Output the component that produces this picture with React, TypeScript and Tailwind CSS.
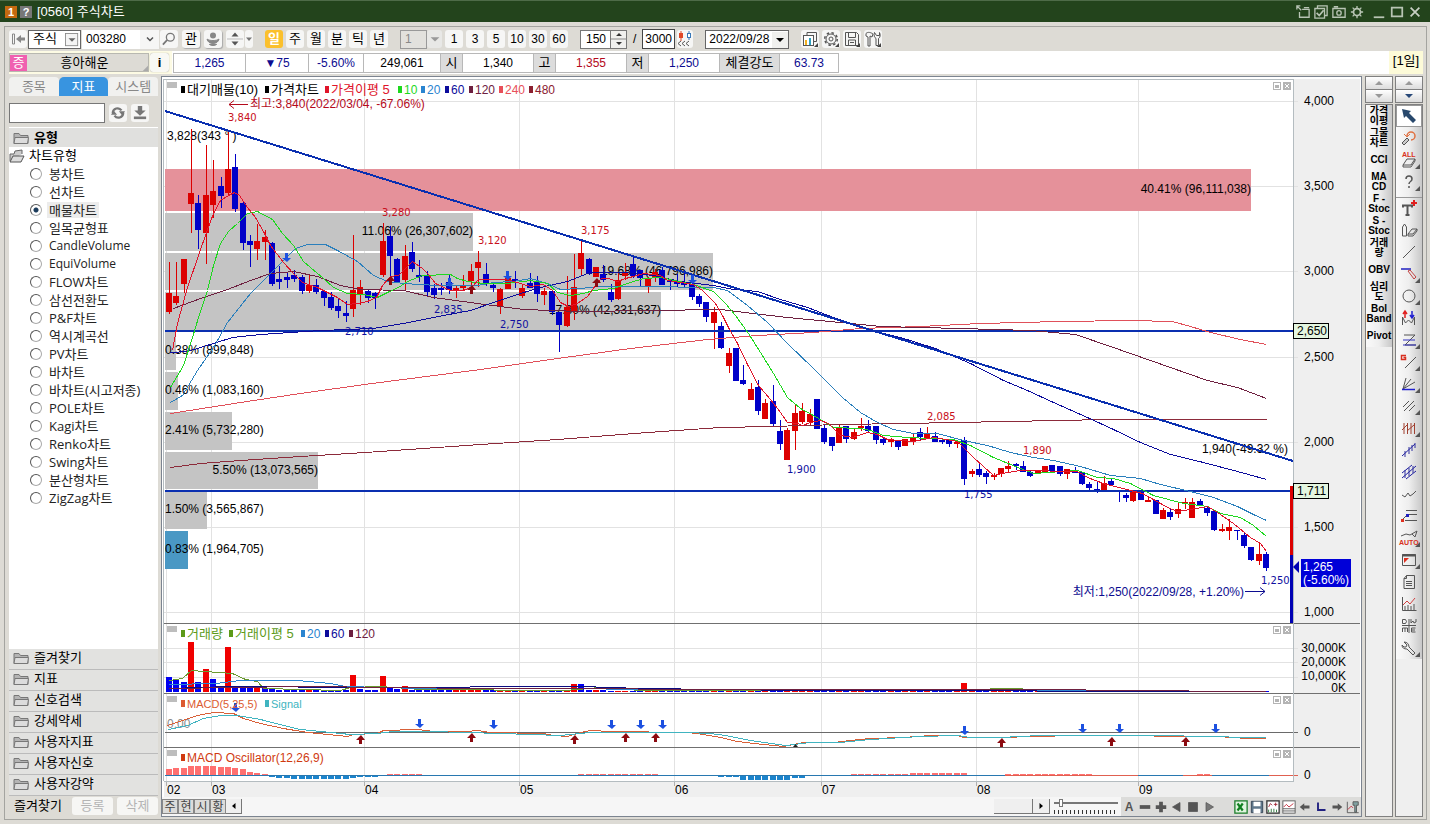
import { useState } from 'react';
import type { ReactNode } from 'react';

// [high, top, bottom, low, rising]
type Candle = [number, number, number, number, 0 | 1];

const candles: Candle[] = [
  [262, 293, 312, 314, 1], [262, 296, 303, 305, 1], [259, 259, 284, 293, 1], [129, 193, 204, 233, 1],
  [195, 203, 230, 249, 0], [145, 195, 233, 264, 1], [160, 191, 205, 218, 1], [177, 186, 196, 208, 0],
  [130, 169, 193, 195, 1], [154, 167, 209, 212, 0], [201, 203, 243, 250, 0], [235, 241, 245, 267, 0],
  [224, 241, 249, 260, 1], [230, 237, 242, 260, 1], [242, 243, 284, 286, 0], [266, 279, 282, 289, 0],
  [272, 277, 280, 288, 0], [270, 275, 279, 282, 0], [275, 277, 291, 294, 0], [274, 285, 291, 293, 1],
  [279, 285, 292, 294, 0], [291, 291, 298, 306, 0], [292, 297, 308, 310, 0], [299, 306, 311, 318, 0],
  [301, 313, 316, 322, 0], [235, 290, 309, 317, 1], [280, 287, 295, 305, 1], [289, 291, 298, 303, 0],
  [292, 293, 298, 309, 0], [223, 241, 275, 277, 1], [226, 236, 256, 280, 0], [258, 259, 282, 283, 0],
  [245, 256, 280, 290, 1], [242, 252, 269, 272, 0], [260, 275, 277, 282, 0], [271, 276, 292, 296, 0],
  [284, 288, 295, 299, 0], [283, 288, 290, 295, 0], [275, 282, 290, 294, 0], [285, 288, 290, 298, 1],
  [275, 286, 288, 290, 1], [264, 271, 281, 293, 1], [251, 262, 268, 287, 1], [263, 274, 284, 286, 0],
  [282, 285, 288, 292, 0], [288, 289, 306, 314, 1], [277, 278, 289, 289, 1], [271, 279, 281, 288, 0],
  [284, 288, 296, 298, 1], [273, 283, 288, 288, 0], [276, 281, 294, 302, 0], [288, 291, 295, 305, 1],
  [290, 291, 312, 315, 0], [312, 312, 325, 352, 0], [276, 307, 326, 327, 1], [254, 287, 311, 320, 1],
  [241, 253, 269, 275, 1], [258, 259, 274, 275, 0], [267, 267, 277, 277, 1], [265, 274, 280, 282, 0],
  [284, 292, 300, 302, 0], [272, 280, 299, 300, 1], [263, 272, 276, 280, 1], [257, 264, 276, 278, 0],
  [270, 270, 278, 287, 0], [277, 278, 286, 293, 1], [269, 272, 278, 282, 1], [267, 270, 285, 285, 0],
  [280, 280, 282, 290, 0], [274, 282, 284, 287, 0], [270, 283, 285, 287, 0], [281, 284, 297, 300, 0],
  [294, 296, 304, 307, 0], [302, 302, 317, 322, 0], [307, 312, 323, 349, 1], [322, 326, 348, 349, 0],
  [348, 353, 366, 373, 1], [348, 348, 381, 381, 0], [365, 380, 384, 385, 0], [383, 389, 400, 400, 1],
  [380, 387, 411, 415, 0], [399, 403, 419, 419, 1], [385, 401, 424, 426, 0], [420, 431, 444, 450, 0],
  [428, 430, 460, 460, 1], [404, 413, 431, 450, 1], [403, 411, 422, 424, 1], [409, 414, 422, 425, 1],
  [399, 399, 429, 429, 0], [424, 428, 442, 444, 0], [437, 437, 446, 451, 0], [425, 427, 443, 443, 1],
  [426, 426, 439, 443, 0], [429, 432, 439, 440, 1], [418, 426, 428, 431, 1], [420, 426, 431, 433, 0],
  [426, 426, 440, 444, 0], [437, 439, 443, 445, 0], [438, 439, 442, 447, 1], [440, 440, 447, 450, 0],
  [439, 439, 446, 446, 1], [433, 438, 442, 445, 1], [428, 432, 437, 441, 0], [427, 434, 438, 439, 1],
  [432, 436, 442, 442, 0], [440, 440, 442, 444, 0], [439, 439, 444, 447, 0], [440, 442, 444, 448, 1],
  [437, 440, 479, 485, 0], [469, 471, 474, 477, 1], [462, 469, 475, 477, 0], [471, 473, 477, 484, 0],
  [473, 475, 477, 480, 1], [468, 468, 474, 477, 1], [461, 466, 469, 472, 1], [463, 464, 466, 470, 0],
  [461, 466, 472, 472, 0], [470, 472, 476, 477, 0], [470, 470, 473, 473, 1], [466, 466, 473, 473, 1],
  [465, 465, 471, 472, 0], [466, 466, 474, 476, 0], [469, 469, 474, 479, 1], [467, 470, 473, 473, 0],
  [472, 472, 484, 485, 0], [482, 484, 488, 490, 0], [481, 489, 491, 493, 0], [476, 483, 490, 491, 1],
  [478, 481, 485, 486, 0], [490, 490, 492, 502, 0], [493, 495, 498, 502, 0], [491, 491, 501, 502, 1],
  [492, 492, 500, 500, 0], [496, 500, 502, 502, 1], [500, 500, 514, 514, 0], [508, 510, 519, 519, 1],
  [509, 512, 517, 520, 0], [502, 509, 514, 518, 1], [498, 502, 504, 509, 1], [498, 502, 518, 518, 1],
  [499, 501, 505, 506, 0], [506, 508, 513, 516, 0], [511, 511, 530, 531, 0], [524, 529, 531, 532, 1],
  [519, 527, 531, 540, 1], [530, 530, 531, 540, 0], [533, 535, 546, 548, 0], [547, 547, 560, 561, 0],
  [542, 554, 561, 565, 1], [552, 554, 568, 571, 0],
];

const xAt = (i: number) => Math.round(169 + i * 7.3624);

const averages = [
  { color: '#8c2a3a', points: '170,467 200,463 240,460 300,456 365,452 480,444 557,439 647,432 720,427 770,426 840,424 903,423 1007,421 1107,419 1266,419' },
  { color: '#e0505a', points: '170,413 240,402 300,393 364,384 480,369 557,358 630,348 707,339 757,335 813,332 860,328 920,326 980,323 1060,321 1130,320 1172,321 1190,326 1210,332 1240,339 1266,344' },
  { color: '#6e2040', points: '173,308 200,298 227,289 250,280 270,273 293,271 317,276 340,285 360,289 403,290 433,297 477,303 523,309 580,311 720,309 753,313 787,317 840,322 880,326 960,328 1030,330 1075,334 1110,346 1150,360 1207,380 1237,387 1266,398' },
  { color: '#0c0c9c', points: '170,352 187,351 200,347 232,337 260,334 320,330 373,328 403,323 443,315 470,310 493,302 520,293 540,287 567,281 587,273 597,272 623,272 653,275 680,281 713,285 733,289 757,291 780,299 807,307 833,317 870,330 900,337 935,348 970,363 1003,380 1027,390 1053,402 1087,417 1113,429 1140,442 1170,454 1203,462 1237,471 1266,479' },
  { color: '#2a7fbc', points: '170,402 182,395 197,370 213,347 227,322 250,293 270,273 285,258 295,248 307,244 325,244 337,250 357,261 373,275 387,281 403,283 437,285 477,285 493,282 513,281 530,278 547,283 560,289 580,288 600,286 640,286 713,287 727,290 747,305 767,322 787,343 813,368 842,397 860,412 877,422 893,429 913,433 937,433 963,440 987,445 1010,452 1033,457 1053,460 1080,466 1110,475 1140,478 1160,484 1190,491 1213,497 1237,506 1253,514 1266,520' },
  { color: '#1ed81e', points: '170,387 183,365 192,337 198,317 207,290 213,265 220,243 228,231 237,223 247,213 257,211 272,219 282,233 293,245 303,261 310,267 323,278 333,287 347,293 363,294 377,297 387,292 398,287 407,281 422,275 450,274 457,278 467,281 483,283 507,283 530,280 547,283 557,292 570,295 583,293 593,290 613,288 630,282 643,278 660,277 693,284 713,291 725,303 735,315 748,333 760,352 773,373 787,397 800,408 813,415 833,427 860,428 870,430 883,435 907,437 953,439 970,445 993,457 1020,468 1033,473 1077,470 1097,477 1113,478 1130,483 1153,495 1183,503 1207,506 1220,513 1240,517 1253,525 1266,536' },
  { color: '#e0142a', points: '172,350 177,323 187,287 198,255 206,232 213,213 220,200 228,195 234,192 239,195 247,207 255,217 263,231 270,245 283,262 293,273 302,282 317,287 327,292 337,297 347,304 357,303 367,301 376,297 382,285 390,276 398,275 405,268 412,261 422,268 428,274 435,283 450,290 463,290 472,286 478,279 493,279 507,279 513,281 530,286 543,284 552,290 560,302 568,306 577,303 587,296 595,285 601,278 608,278 617,281 625,278 633,276 643,273 660,275 667,280 680,282 693,284 702,290 715,303 722,315 728,327 737,343 747,364 758,385 770,399 780,412 787,422 797,423 802,425 810,422 820,420 828,423 840,435 852,437 867,432 877,434 887,439 913,441 933,437 957,441 964,448 973,457 983,466 993,475 1007,472 1020,470 1077,471 1087,477 1103,483 1130,490 1142,493 1153,499 1167,507 1177,511 1190,509 1207,506 1217,512 1233,523 1250,537 1260,543 1266,551' },
];

const profile = [
  { y: 169, h: 42, end: 1251, text: '40.41% (96,111,038)', tx: 1251, color: '#e5919a' },
  { y: 213, h: 38, end: 473, text: '11.06% (26,307,602)', tx: 473, color: '#c4c4c4' },
  { y: 253, h: 37, end: 713, text: '19.68% (46,796,986)', tx: 713, color: '#c4c4c4' },
  { y: 292, h: 38, end: 661, text: '17.80% (42,331,637)', tx: 661, color: '#c4c4c4' },
  { y: 332, h: 38, end: 176, text: '0.38% (899,848)', tx: 0, color: '#c4c4c4' },
  { y: 372, h: 38, end: 178, text: '0.46% (1,083,160)', tx: 0, color: '#c4c4c4' },
  { y: 412, h: 38, end: 232, text: '2.41% (5,732,280)', tx: 0, color: '#c4c4c4' },
  { y: 452, h: 37, end: 318, text: '5.50% (13,073,565)', tx: 318, color: '#c4c4c4' },
  { y: 491, h: 38, end: 207, text: '1.50% (3,565,867)', tx: 0, color: '#c4c4c4' },
  { y: 531, h: 38, end: 188, text: '0.83% (1,964,705)', tx: 0, color: '#4a98c4' },
];

const peaks = [
  [228, 121, '3,840'], [382, 216, '3,280'], [478, 244, '3,120'], [581, 234, '3,175'], [927, 420, '2,085'], [1023, 454, '1,890'],
] as const;
const troughs = [
  [345, 335, '2,710'], [434, 313, '2,835'], [500, 328, '2,750'], [787, 473, '1,900'], [964, 498, '1,755'], [1261, 584, '1,250'],
] as const;

const months = [
  [166, '02'], [211, '03'], [364, '04'], [519, '05'], [674, '06'], [821, '07'], [976, '08'], [1138, '09'],
] as const;

const prices = [
  [101, '4,000'], [186, '3,500'], [271, '3,000'], [357, '2,500'], [442, '2,000'], [527, '1,500'], [612, '1,000'],
] as const;

// height in px, 1 = red
const tallVolumes: Record<number, [number, 0 | 1]> = {
  0: [15, 0], 1: [13, 0], 2: [10, 0], 3: [50, 1], 4: [10, 0], 5: [23, 1], 6: [13, 0], 7: [6, 0], 8: [45, 1], 9: [6, 0],
  10: [6, 0], 11: [5, 0], 12: [4, 1], 13: [4, 0], 14: [3, 0], 25: [17, 1], 26: [3, 0], 29: [16, 1], 30: [4, 0], 31: [3, 0],
  32: [6, 1], 55: [8, 1], 56: [8, 0], 108: [9, 1],
};

const oscillator = (i: number) => {
  const head = [6, 7, 7, 9, 9, 9, 9, 8, 8, 7, 6, 3, 2, 1, -2, -3, -3, -4, -4, -4, -4, -4, -4, -4, -4, -3, -2, -2, -2];
  if (i < head.length) return head[i];
  if (i < 30) return 0;
  if (i < 35) return 1;
  if (i > 35 && i < 41) return -1;
  if (i > 51 && i < 56) return -1;
  if (i > 55 && i < 67) return 1;
  if (i > 71 && i < 75) return -1;
  if (i > 74 && i < 78) return -2;
  if (i > 77 && i < 85) return -5;
  if (i > 84 && i < 87) return -3;
  if (i > 86 && i < 92) return -1;
  if (i > 92 && i < 101) return 1;
  if (i > 100 && i < 109) return 2;
  if (i > 113 && i < 126) return 1;
  if (i > 139 && i < 142) return 1;
  if (i > 145) return -1;
  return 0;
};

const macdLine = '167,725 182,720 197,715 213,712 233,713 243,718 260,723 283,728 307,732 327,734 347,736 353,734 377,733 383,730 417,729 433,731 467,731 477,730 490,732 543,733 553,735 567,736 580,732 590,730 610,731 687,732 703,734 720,737 737,741 753,743 783,746 803,742 833,742 850,740 870,738 903,737 930,735 957,735 963,737 1000,737 1033,736 1077,735 1150,735 1157,736 1217,736 1247,738 1265,738';
const signalLine = '168,729 187,725 203,718 220,715 237,715 260,719 283,725 300,729 320,731 350,734 377,733 393,731 430,731 500,733 560,735 590,732 687,732 710,733 725,735 750,740 785,745 810,742 840,742 870,739 920,736 957,735 970,737 1000,737 1040,735 1150,735 1217,736 1240,737 1265,737';

const Down = ({ x, y }: { x: number; y: number }) => (
  <path d={`M${x - 1} ${y - 5}h3v5h3l-4 4l-5 -4h3z`} fill="#1c50e0" />
);
const Up = ({ x, y }: { x: number; y: number }) => (
  <path d={`M${x - 1} ${y + 4}h3v-4h3l-4 -5l-5 5h3z`} fill="#8c0a10" />
);

function Legend({ y, size = 12, items }: { y: number; size?: number; items: [number, string, string][] }) {
  return (
    <g>
      <rect x={167} y={y - 12} width={10} height={6} fill="#bdbdbd" />
      {items.map(([x, text, color]) => (
        <g key={text} fill={color}>
          <rect x={x} y={y - 8} width={4} height={7} />
          <text x={x + 6} y={y} fontSize={/[가-힣]/.test(text) ? 13 : size}>{text}</text>
        </g>
      ))}
    </g>
  );
}

function PaneButtons({ y }: { y: number }) {
  return (
    <g fill="none" stroke="#b4b4b4">
      <rect x={1273.5} y={y + 0.5} width={7} height={7} />
      <rect x={1275} y={y + 3} width={4} height={3} fill="#b4b4b4" stroke="none" />
      <rect x={1283} y={y} width={8} height={8} fill="#b4b4b4" stroke="none" />
      <path d={`M1285 ${y + 2}l4 4m0 -4l-4 4`} stroke="#fff" />
    </g>
  );
}

function StockChart() {
  return (
    <svg viewBox="162 77 1199 720" className="block h-auto w-full" fontSize={12} role="img" aria-label="주식차트">
      <rect x={162} y={77} width={1199} height={720} fill="#fff" />
      <rect x={1294} y={79} width={66} height={718} fill="#efefef" />
      <rect x={164} y={782} width={1196} height={15} fill="#efefef" />

      <g shapeRendering="crispEdges">
        {/* grid */}
        {months.map(([x]) => <path key={x} d={`M${x + 0.5} 79V781`} stroke="#e2e2e2" />)}
        {prices.map(([y]) => <path key={y} d={`M164 ${y + 0.5}H1298`} stroke="#e2e2e2" />)}
        {[648, 662, 677].map(y => <path key={y} d={`M164 ${y + 0.5}H1298`} stroke="#e2e2e2" />)}
        {months.map(([x]) => <path key={x} d={`M${x + 0.5} 781v5`} stroke="#b0b0b0" />)}

        {profile.map(p => (
          <rect key={p.y} x={165} y={p.y} width={p.end - 165} height={p.h} fill={p.color} />
        ))}
      </g>

      <g fill="#000">
        {profile.map(p => (
          <text key={p.y} x={p.tx || 165} y={p.y + (p.y === 169 ? 24 : 22)} textAnchor={p.tx ? 'end' : 'start'}>{p.text}</text>
        ))}
        <text x={167} y={140}>3,828(343 ° )</text>
        <text x={1288} y={453} textAnchor="end">1,940(-49.32 %)</text>
      </g>

      <g shapeRendering="crispEdges">
        {candles.map(([high, top, bottom, low, rising], i) => (
          <g key={i} fill={rising ? '#dc0000' : '#0000c8'}>
            <rect x={xAt(i)} y={high} width={1} height={low - high} />
            <rect x={xAt(i) - 3} y={top} width={6} height={bottom - top} />
          </g>
        ))}
        <path d="M165 331H1293M165 491H1293" stroke="#0a2fb0" strokeWidth={2} />

        {/* half a pixel down, so that flat stretches fill one pixel row */}
        <g transform="translate(0.5 0.5)" fill="none">
          {averages.map(a => <polyline key={a.color} points={a.points} stroke={a.color} />)}
        </g>
        <path d="M165 111L1293 461" stroke="#0a2fb0" strokeWidth={2} />
      </g>

      <Down x={286} y={258} /><Down x={449} y={283} /><Down x={507} y={276} /><Down x={692} y={280} />
      <Up x={390} y={281} /><Up x={471} y={290} /><Up x={596} y={283} />

      <g fontFamily="DejaVu Sans, sans-serif" fontSize={10}>
        {peaks.map(([x, y, t]) => <text key={t} x={x} y={y} fill="#c81020">{t}</text>)}
        {troughs.map(([x, y, t]) => <text key={t} x={x} y={y} fill="#1010a0">{t}</text>)}
      </g>
      <g fill="#b40a1c">
        <text x={250} y={108}>최고:3,840(2022/03/04, -67.06%)</text>
        <path d="M248 104.500H229m5 -4l-5 4l5 4" fill="none" stroke="#b40a1c" />
      </g>
      <g fill="#0c0c90">
        <text x={1244} y={596} textAnchor="end">최저:1,250(2022/09/28, +1.20%)</text>
        <path d="M1245 591.500H1265m-5 -4l5 4l-5 4" fill="none" stroke="#0c0c90" />
      </g>

      {/* volume */}
      <g shapeRendering="crispEdges">
        {candles.map((c, i) => {
          const [h, red] = tallVolumes[i] ?? [i < 60 ? 2 : 1, c[4]];
          return <rect key={i} x={xAt(i) - 3} y={692 - h} width={6} height={h} fill={red ? '#f00000' : '#0000f0'} />;
        })}
        <g fill="none" transform="translate(0.5 0.5)">
          <polyline points="169,680 182,678 191,670 232,673 245,679 257,681 263,688 340,690 350,687 380,686 420,689 565,690 600,687 640,690 960,690 1000,688 1090,690 1266,691" stroke="#6a9a30" />
          <polyline points="169,684 215,683 240,680 297,680 330,683 345,686 420,688 570,688 640,689 960,690 1266,691" stroke="#2a84d0" />
          <polyline points="169,688 230,686 364,687 580,686 640,688 800,690 1266,691" stroke="#0c0c80" />
          <polyline points="169,688 300,686 480,688 790,689 1060,689 1110,690 1266,691" stroke="#6e2040" />
        </g>
      </g>

      {/* macd */}
      <text x={167} y={728} fill="#8a8a8a">0.00</text>
      <g shapeRendering="crispEdges" fill="none">
        <path d="M165 732.500H1298" stroke="#6a6a6a" />
        <g transform="translate(0.5 0.5)">
          <polyline points={macdLine} stroke="#d86038" />
          <polyline points={signalLine} stroke="#40b4c0" />
        </g>
      </g>
      {[[235, 708], [419, 724], [493, 725], [611, 725], [640, 725], [662, 725], [964, 731], [1082, 729], [1119, 729], [1215, 729]].map(([x, y]) => (
        <Down key={x} x={x} y={y} />
      ))}
      {[[360, 740], [471, 738], [574, 740], [625, 738], [655, 738], [1001, 743], [1111, 742], [1185, 742]].map(([x, y]) => (
        <Up key={x} x={x} y={y} />
      ))}
      <path d="M793 747l2.500 -3l2.500 3z" fill="#222" />

      {/* oscillator */}
      <g shapeRendering="crispEdges">
        {candles.map((_, i) => {
          const v = oscillator(i);
          return <rect key={i} x={xAt(i) - 3} y={v > 0 ? 775 - v : 775} width={6} height={Math.abs(v)} fill={v > 0 ? '#ff7070' : '#1c84cc'} />;
        })}
        <path d="M165 775.500H1298" stroke="#2878b0" />
        <path d="M1005 775.500H1138M1183 775.500H1212M1269 775.500H1298" stroke="#e06050" />
        <path d="M164 623.500H1360M164 693.500H1360M164 747.500H1360" stroke="#707070" />
        <path d="M163.500 781V79.500H1293.500V781.500H164" fill="none" stroke="#b4bcc0" />
      </g>

      <Legend
        y={94}
        items={[
          [181, '대기매물(10)', '#000'], [265, '가격차트', '#000'], [325, '가격이평 5', '#e0142a'], [398, '10', '#1ed81e'],
          [421, '20', '#2a84d0'], [445, '60', '#0c0c9c'], [469, '120', '#6e2040'], [499, '240', '#e8505a'], [529, '480', '#8c2030'],
        ]}
      />
      <Legend y={638} items={[[181, '거래량', '#5c9a18'], [229, '거래이평 5', '#5c9a18'], [301, '20', '#2a84d0'], [325, '60', '#0c0c9c'], [349, '120', '#6e2040']]} />
      <Legend y={708} size={11} items={[[181, 'MACD(5,25,5)', '#dc5a30'], [265, 'Signal', '#40b4c0']]} />
      <Legend y={762} items={[[181, 'MACD Oscillator(12,26,9)', '#d03a10']]} />
      {[82, 626, 696, 750].map(y => <PaneButtons key={y} y={y} />)}

      {/* axes */}
      <g fill="#000">
        {prices.map(([y, t]) => <text key={t} x={1304} y={y + 4}>{t}</text>)}
        <g textAnchor="end">
          <text x={1346} y={652}>30,000K</text>
          <text x={1346} y={666}>20,000K</text>
          <text x={1346} y={680}>10,000K</text>
          <text x={1346} y={692}>0K</text>
        </g>
        <text x={1304} y={736}>0</text>
        <text x={1304} y={779}>0</text>
        {months.map(([x, t]) => <text key={t} x={x + 1} y={794}>{t}</text>)}
      </g>
      <g shapeRendering="crispEdges">
        <rect x={1290} y={486} width={3} height={69} fill="#dc0000" />
        <rect x={1290} y={555} width={3} height={68} fill="#0000b4" />
        <rect x={1293.500} y={323.500} width={35} height={15} fill="#e4f6e0" stroke="#000" />
        <rect x={1293.500} y={483.500} width={35} height={15} fill="#e4f6e0" stroke="#000" />
        <rect x={1301} y={559} width={50} height={28} fill="#0000d8" />
      </g>
      <path d="M1293 567l6 -6v12z" fill="#0000b4" />
      <text x={1297} y={335}>2,650</text>
      <text x={1297} y={495}>1,711</text>
      <text x={1303} y={571} fill="#fff">1,265</text>
      <text x={1303} y={584} fill="#fff">(-5.60%)</text>
    </svg>
  );
}

function Icon({ children, size = 16, className = '' }: { children: ReactNode; size?: number; className?: string }) {
  return (
    <svg viewBox="0 0 16 16" width={size} height={size} fill="none" stroke="#555" className={`shrink-0 ${className}`} aria-hidden="true">
      {children}
    </svg>
  );
}

const tool = 'flex h-[18px] shrink-0 items-center justify-center rounded-[3px] bg-[#f6f6f5] text-[13px]';

function Toolbar() {
  const [period, setPeriod] = useState('일');
  return (
    <div className="flex h-6 items-center overflow-hidden">
      <button className={`${tool} w-[18px]`} aria-label="처음">
        <Icon><path d="M2.500 3v10h2v-10z" stroke="#888" /><path d="M6 8l5 -4v2.500h4v3h-4v2.500z" fill="#888" stroke="none" /></Icon>
      </button>
      <div className="relative ml-px shrink-0">
        <select aria-label="종류" className="h-[19px] w-[53px] appearance-none border border-[#666] bg-white pl-1 text-[13px] leading-4">
          <option>주식</option>
        </select>
        <Icon size={14} className="pointer-events-none absolute top-[3px] right-[2px]"><rect x="0.500" y="0.500" width="14" height="14" fill="#f4f4f4" stroke="#888" /><path d="M4 6h8l-4 4z" fill="#666" stroke="none" /></Icon>
      </div>
      <input aria-label="종목코드" defaultValue="003280" className="ml-px h-[19px] w-[58px] shrink-0 bg-white px-1 outline-none" />
      <button className="flex h-[19px] w-[19px] shrink-0 items-center justify-center bg-[#f6f6f5]" aria-label="종목 목록">
        <Icon size={12}><path d="M4 6l4 4l4 -4" strokeWidth="2" /></Icon>
      </button>
      <button className={`${tool} ml-px w-[18px]`} aria-label="검색">
        <Icon size={14}><circle cx="9.500" cy="6" r="4.500" stroke="#777" strokeWidth="1.500" /><path d="M6 9l-5 5.500" stroke="#777" strokeWidth="2" /></Icon>
      </button>
      <button className={`${tool} ml-1 w-[18px] shadow-[1px_1px_1px_#aaa]`}>관</button>
      <button className={`${tool} ml-1 w-[18px] shadow-[1px_1px_1px_#aaa]`} aria-label="알림">
        <Icon><circle cx="8" cy="4.500" r="3" fill="#888" stroke="none" /><path d="M2 8c1 6 11 6 12 0c-2 2 -10 2 -12 0zM4 13c2 2 6 2 8 0" fill="#888" stroke="#888" /></Icon>
      </button>
      <button className={`${tool} ml-1 w-[18px]`} aria-label="이전 다음">
        <Icon><path d="M4.500 5.500l3.500 -4l3.500 4zM4.500 10.500l3.500 4l3.500 -4z" fill="#555" stroke="none" /><path d="M0 8h16" stroke="#bbb" /></Icon>
      </button>
      <button className={`${tool} ml-px w-2`} aria-label="더보기"><Icon size={8}><path d="M2 5h12l-6 7z" fill="#777" stroke="none" /></Icon></button>

      <div className="ml-3 flex shrink-0 gap-[3px]">
        {['일', '주', '월', '분', '틱', '년'].map(p => (
          <button key={p} onClick={() => setPeriod(p)} className={`${tool} w-[18px] ${p === period ? 'bg-[#fbc02c]! font-bold text-white' : ''}`}>{p}</button>
        ))}
      </div>

      <input aria-label="주기" disabled defaultValue="1" className="ml-3 h-[19px] w-[27px] shrink-0 border border-[#999] bg-[#e2e1dd] px-1 text-[#888]" />
      <button className={`${tool} w-[15px] bg-[#e8e8e6]!`} aria-label="주기 목록"><Icon size={10}><path d="M1 5h14l-7 7z" fill="#999" stroke="none" /></Icon></button>
      <div className="ml-[3px] flex shrink-0 gap-[3px]">
        {['1', '3', '5', '10', '30', '60'].map(n => (
          <button key={n} className={`${tool} w-[18px] text-[12px]!`}>{n}</button>
        ))}
      </div>

      <input aria-label="봉 개수" defaultValue="150" className="ml-3 h-[19px] w-[30px] shrink-0 border border-r-0 border-[#777] bg-white px-1 text-right outline-none" />
      <button className="flex h-[19px] w-[17px] shrink-0 items-center justify-center border border-[#777] bg-[#f0f0ee]" aria-label="개수 조절">
        <Icon><path d="M5 5l3 -3l3 3zM5 11l3 3l3 -3z" fill="#333" stroke="none" /><path d="M0 8h16" stroke="#888" /></Icon>
      </button>
      <span className="mx-1.5 shrink-0">/</span>
      <input aria-label="전체 개수" defaultValue="3000" className="h-[20px] w-[33px] shrink-0 border border-[#444] bg-white px-[2px] outline-none" />
      <button className={`${tool} ml-0.5 w-[16px]`} aria-label="봉 간격">
        <Icon><path d="M4 0v10" stroke="#e04828" /><rect x="2" y="2" width="4" height="5" fill="#e04828" stroke="none" /><path d="M12 0v9" stroke="#3878b8" /><rect x="10.500" y="2.500" width="3" height="4" fill="#fff" stroke="#3878b8" /><path d="M4 10l-3 2.500l3 2.500M8 10l-3 2.500l3 2.500M12 10l-3 2.500l3 2.500" /></Icon>
      </button>
      <div className="relative ml-3 shrink-0">
        <select aria-label="기준일" className="h-[19px] w-[84px] appearance-none border border-[#666] bg-white pl-[3px] text-[12px] leading-4">
          <option>2022/09/28</option>
        </select>
        <Icon className="pointer-events-none absolute top-[2px] right-[1px]"><rect width="16" height="16" fill="#f0f0ee" stroke="none" /><path d="M4 6h8l-4 4z" fill="#000" stroke="none" /></Icon>
      </div>
      <div className="ml-3 flex shrink-0 gap-[3px]">
        <button className={`${tool} w-[18px]`} aria-label="차트 추가">
          <Icon><path d="M5 4v-2.500h9.500v9h-3" /><rect x="1.500" y="4.500" width="10" height="10" fill="#fff" /><path d="M4 14v-5" stroke="#f0b020" strokeWidth="2" /><path d="M8 14v-7" stroke="#30a0c0" strokeWidth="2" /><path d="M16 12v4h-4z" fill="#444" stroke="none" /></Icon>
        </button>
        <button className={`${tool} w-[18px]`} aria-label="설정">
          <Icon><circle cx="8" cy="8" r="6.300" strokeWidth="1.500" strokeDasharray="2.500 2.400" /><circle cx="8" cy="8" r="5" /><circle cx="8" cy="8" r="2" /><path d="M16 12v4h-4z" fill="#444" stroke="none" /></Icon>
        </button>
        <button className={`${tool} w-[18px]`} aria-label="저장">
          <Icon><path d="M1.500 1.500h11l2 2v11h-13z" /><path d="M4.500 1.500v5h7v-5M4.500 14v-5h7v5M6 11.500h4" /><path d="M16 12v4h-4z" fill="#444" stroke="none" /></Icon>
        </button>
        <button className={`${tool} w-[18px]`} aria-label="도구">
          <Icon><path d="M1 2.500c2 -2 5 -1 7 .5l-1 3l-2 -1v10h-2v-9l-2 -1zM9.500 1.500c-1 3 0 5 1.500 6v7h2.500v-7c2 -1 2 -4 1 -6v3h-3z" /><path d="M16 12v4h-4z" fill="#444" stroke="none" /></Icon>
        </button>
      </div>
    </div>
  );
}

const quote = [
  { text: '1,265', className: 'w-[72px] text-[#0c0c90]' },
  { text: '▼75', className: 'w-[63px] text-[#0c0c90]' },
  { text: '-5.60%', className: 'w-[55px] text-[#0c0c90]' },
  { text: '249,061', className: 'w-[77px]' },
  { text: '시', className: 'w-[22px] bg-[#dcdcdc] text-[13px]', head: true },
  { text: '1,340', className: 'w-[71px]' },
  { text: '고', className: 'w-[22px] bg-[#dcdcdc] text-[13px]', head: true },
  { text: '1,355', className: 'w-[71px] text-[#b40a1c]' },
  { text: '저', className: 'w-[22px] bg-[#dcdcdc] text-[13px]', head: true },
  { text: '1,250', className: 'w-[71px] text-[#0c0c90]' },
  { text: '체결강도', className: 'w-[60px] bg-[#dcdcdc] text-[13px]', head: true },
  { text: '63.73', className: 'w-[59px] text-[#0c0c90]' },
];

function QuoteRow() {
  return (
    <div className="flex h-[23px] items-center bg-white">
      <div className="flex h-full w-[163px] shrink-0 items-center bg-[#fdfbe4]">
        <button className="flex h-[19px] w-[140px] items-center border border-[#b8b8b0] bg-[#dddbd5] text-[13px]">
          <span className="flex h-[16px] w-[17px] items-center justify-center bg-[#f060b0] text-white">증</span>
          <span className="flex-1">흥아해운</span>
          <Icon size={6} className="self-end"><path d="M16 2v14h-14z" fill="#aaa" stroke="none" /></Icon>
        </button>
        <button className="ml-px h-[19px] w-[19px] rounded-[3px] bg-[#f8f8f4] text-[13px] leading-4 font-bold shadow-[0_0_1px_#888]">i</button>
      </div>
      <table className="ml-px h-[20px] border-collapse">
        <tbody>
          <tr>
            {quote.map(q => {
              const Cell = q.head ? 'th' : 'td';
              return (
                <Cell key={q.text} className={`border border-[#b8b8b8] p-0 text-center leading-4 font-normal ${q.className}`}>
                  <span className="block">{q.text}</span>
                </Cell>
              );
            })}
          </tr>
        </tbody>
      </table>
      <span className="ml-auto flex h-full w-[34px] shrink-0 items-start justify-center bg-[#fdfbd8] pt-[2px] text-[13px] leading-4">[1일]</span>
    </div>
  );
}

const chartTypes = [
  '봉차트', '선차트', '매물차트', '일목균형표', 'CandleVolume', 'EquiVolume', 'FLOW차트', '삼선전환도', 'P&F차트', '역시계곡선',
  'PV차트', '바차트', '바차트(시고저종)', 'POLE차트', 'Kagi차트', 'Renko차트', 'Swing차트', '분산형차트', 'ZigZag차트',
];

const Folder = () => (
  <Icon className="ml-1">
    <path d="M1 13.500v-10h5l1.500 2h7.500v8z" fill="#b4b4b4" stroke="#777" />
    <path d="M1 13.500l1 -6h13.500l-1 6z" fill="#dcdcdc" stroke="#777" />
  </Icon>
);

function Sidebar() {
  const [selected, setSelected] = useState('매물차트');
  return (
    <aside className="flex w-[149px] shrink-0 flex-col text-[13px]">
      <div className="mt-px flex h-[19px]">
        <button className="flex-1 rounded-t-[4px] bg-[#f1f1ef] leading-4 text-[#888]">종목</button>
        <button className="flex-1 rounded-t-[5px] bg-[#3894e0] leading-4 text-white">지표</button>
        <button className="flex-1 rounded-t-[4px] bg-[#f1f1ef] leading-4 text-[#888]">시스템</button>
      </div>
      <div className="mt-[7px] flex items-center gap-1">
        <input aria-label="지표 검색" className="h-5 w-24 border border-[#777] bg-white px-1 outline-none" />
        <button className={`${tool} w-[18px]`} aria-label="새로고침">
          <Icon size={14}><path d="M2 8a5.500 5.500 0 0 1 10 -3M14 8a5.500 5.500 0 0 1 -10 3" stroke="#777" strokeWidth="2.500" /><path d="M9 6h7l-3 5zM7 10h-7l3 -5z" fill="#777" stroke="none" /></Icon>
        </button>
        <button className={`${tool} w-[18px]`} aria-label="내려받기">
          <Icon size={14}><path d="M5.500 0h5v5h4l-6.500 6l-6.500 -6h4z" fill="#777" stroke="none" /><path d="M1 13.500h14" stroke="#777" strokeWidth="3" /></Icon>
        </button>
      </div>
      <h2 className="mt-1 flex h-5 items-center gap-[5px] border-t border-white bg-[#e0e0de] font-bold"><Folder />유형</h2>
      <div className="flex-1 bg-white">
        <div className="flex h-[18px] items-center gap-1">
          <Icon><path d="M1 13v-7h4l1 -3l7 -1v4" fill="#ccc" stroke="#666" /><path d="M1 14l3 -6h11l-3 6z" fill="#ddd" stroke="#555" /></Icon>
          차트유형
        </div>
        {chartTypes.map(t => (
          <label key={t} className="flex h-[18px] items-center pl-[21px]">
            <input
              type="radio"
              name="chart-type"
              checked={t === selected}
              onChange={() => setSelected(t)}
              className="h-3 w-3 appearance-none rounded-full border border-[#555] border-r-[#aaa] border-b-[#aaa] bg-white checked:bg-[radial-gradient(circle,#1c3c5c_2px,white_3px)]"
            />
            <span className={`ml-[5px] px-[2px] font-['Open_Sans','Noto_Sans_CJK_KR',sans-serif] leading-4 whitespace-nowrap text-[#222] ${/^[A-Za-z]+$/.test(t) ? 'text-[12px]' : ''} ${t === selected ? 'bg-[#ececec]' : ''}`}>{t}</span>
          </label>
        ))}
      </div>
      {['즐겨찾기', '지표', '신호검색', '강세약세', '사용자지표', '사용자신호', '사용자강약'].map(t => (
        <button key={t} className="flex h-[21px] items-center gap-[5px] border-b border-[#bbb] bg-[#e2e2e0] pb-[2px] leading-4"><Folder />{t}</button>
      ))}
      <div className="flex h-[21px] items-center gap-1 pb-[2px] pl-[5px] leading-4">
        <span className="mr-auto whitespace-nowrap">즐겨찾기</span>
        <button disabled className="h-[18px] w-[41px] rounded-[3px] bg-[#f6f6f4] leading-4 text-[#b4b4b4]">등록</button>
        <button disabled className="h-[18px] w-[41px] rounded-[3px] bg-[#f6f6f4] leading-4 text-[#b4b4b4]">삭제</button>
      </div>
    </aside>
  );
}

function ChartFooter() {
  const step = 'flex h-full w-4 items-center justify-center';
  return (
    <div className="flex h-[19px] items-center bg-[#f6f6f6]">
      {['주', '현', '시', '황'].map(t => (
        <button key={t} className="h-[15px] w-4 border border-[#888] bg-[#dcdcda] text-[12px] leading-3 text-[#444]">{t}</button>
      ))}
      <button className="flex h-[15px] w-4 items-center justify-center border-r border-b border-[#777] bg-[#efefef]" aria-label="왼쪽으로"><Icon size={8}><path d="M11 2v12l-7 -6z" fill="#000" stroke="none" /></Icon></button>
      <div className="flex h-[15px] flex-1 justify-end"><div className="w-[39px] border-r border-b border-[#777] bg-[#efefef]" /></div>
      <button className="flex h-[15px] w-[17px] items-center justify-center border-r border-b border-[#777] bg-[#efefef]" aria-label="오른쪽으로"><Icon size={8}><path d="M5 2v12l7 -6z" fill="#000" stroke="none" /></Icon></button>
      <div className="ml-1 flex h-[15px] w-[64px] flex-col bg-[repeating-linear-gradient(90deg,#333_0_1px,transparent_1px_4px)] bg-[length:100%_4px] bg-bottom bg-no-repeat">
        <input type="range" aria-label="확대" defaultValue={8} className="h-2 w-full appearance-none bg-[linear-gradient(#777,#777)] bg-[length:100%_2px] bg-center bg-no-repeat [&::-webkit-slider-thumb]:h-2 [&::-webkit-slider-thumb]:w-1 [&::-webkit-slider-thumb]:appearance-none [&::-webkit-slider-thumb]:border [&::-webkit-slider-thumb]:border-[#777] [&::-webkit-slider-thumb]:bg-white" />
      </div>
      <div className="ml-[3px] flex h-full items-center bg-[#dcdcda]">
        <button className={`${step} font-bold text-[#555]`}>A</button>
        <button className={step} aria-label="축소"><Icon size={12}><path d="M1 8h14" strokeWidth="5" /></Icon></button>
        <button className={step} aria-label="확대"><Icon size={12}><path d="M1 8h14M8 1v14" strokeWidth="5" /></Icon></button>
        <button className={step} aria-label="뒤로"><Icon size={12}><path d="M12 2v12l-10 -6z" fill="#555" /></Icon></button>
        <button className={step} aria-label="정지"><Icon size={12}><path d="M2 2h12v12h-12z" fill="#555" /></Icon></button>
        <button className={step} aria-label="앞으로"><Icon size={12}><path d="M4 2v12l10 -6z" fill="#777" /></Icon></button>
        <button className={`${step} ml-4`} aria-label="엑셀"><Icon size={14}><rect x="1" y="1" width="14" height="14" fill="#e0f4e0" stroke="#208030" strokeWidth="1.500" /><path d="M4 4l6 8M10 4l-6 8" stroke="#108020" strokeWidth="2.500" /></Icon></button>
        <button className={step} aria-label="저장"><Icon size={14}><path d="M1.500 1.500h13v13h-13z" fill="#60788c" stroke="#304050" /><path d="M4 2h8v5h-8zM4 10h8v5h-8z" fill="#fff" stroke="none" /></Icon></button>
        <button className={step} aria-label="차트 분할"><Icon size={14}><rect x="1" y="1" width="14" height="14" fill="#fff" stroke="#333" strokeWidth="1.500" /><path d="M3 8l2 -4l2 2M11 3v4M9 5h4" stroke="#a02030" /><path d="M3 14v-3M6 14v-4M9 14v-4M12 14v-3" stroke="#207030" /></Icon></button>
        <button className={step} aria-label="차트 통합"><Icon size={14}><rect x="1" y="1" width="14" height="14" fill="#fff" /><path d="M2 8l3 -3l3 3l5 -4" stroke="#c02030" /><path d="M1 10h14M1 12.500h14" /></Icon></button>
        <button className={step} aria-label="이전"><Icon size={12}><path d="M1 8l6 -5v3h7v4h-7v3z" fill="#555" stroke="none" /></Icon></button>
        <button className={step} aria-label="로그"><Icon size={12}><path d="M4 2v10h10" stroke="#202080" strokeWidth="2.500" /></Icon></button>
        <button className={step} aria-label="다음"><Icon size={12}><path d="M15 8l-6 -5v3h-7v4h7v3z" fill="#555" stroke="none" /></Icon></button>
        <button className={step} aria-label="차트 설정"><Icon size={14}><path d="M1.500 2v12.500h13" /><path d="M2 11l4 -4l2 2" stroke="#c02030" /><path d="M8 2h6v4h-2v8h-2v-8h-2z" fill="#80a0a0" /></Icon></button>
      </div>
    </div>
  );
}

const Corner = () => <path d="M19 12v5h-5z" fill="#555" stroke="none" />;

const drawTools: { name: string; icon: ReactNode }[] = [
  { name: '선택', icon: <path d="M1 1l2 9l2 -2l7 7l3 -3l-7 -7l2 -2z" fill="#28486c" stroke="none" /> },
  { name: '되돌리기', icon: <><path d="M6 6a4 4 0 1 1 4 4" stroke="#e07040" strokeWidth="1.500" /><path d="M3 4l3 3l3 -3" stroke="#e07040" /><path d="M1 13l5 -5l2 2l-5 5z" fill="#ccc" /></> },
  { name: '전체 지우기', icon: <><text x="1" y="5" fontSize="7" fontWeight="bold" fill="#d83020" stroke="none">ALL</text><path d="M2 13l4 -6h8l-4 6zM2 13v2h8l4 -6v-2" fill="#eee" /><Corner /></> },
  { name: '도움말', icon: <><path d="M5 5c0 -4 6 -4 6 0c0 3 -3 2 -3 5M8 12v2" strokeWidth="1.500" /><Corner /></> },
  { name: '문자', icon: <><path d="M2 6.500v-2h9v2M6.500 5v9M4.500 14h4" strokeWidth="2" /><path d="M13 -1v6M10 2h6" stroke="#e02020" strokeWidth="2" /></> },
  { name: '연필 지우개', icon: <><path d="M1.500 14v-9l2 -3l2 3v9z" /><path d="M7 12l4 -5h5l-4 5zM7 12v2h5l4 -5v-2" /></> },
  { name: '직선', icon: <path d="M2 14l12 -12" /> },
  { name: '추세선', icon: <><path d="M0 3h10" stroke="#2020c0" strokeWidth="1.500" /><path d="M7 5l6 8l2 -2l-6 -7z" stroke="#c04040" /><Corner /></> },
  { name: '원', icon: <><circle cx="8" cy="8" r="6" /><Corner /></> },
  { name: '고저', icon: <><path d="M4 8v-7M2 4l2 -3l2 3" stroke="#e02020" strokeWidth="1.500" /><path d="M11 1v7M9 5l2 3l2 -3" stroke="#2020d0" strokeWidth="1.500" /><path d="M1.500 15v-8l3 6l3 -3l3 3l3 -6v8" /></> },
  { name: '파동', icon: <><path d="M3 3h11l-10 10h11" /><path d="M2 8h12M2 13h13" stroke="#3030c0" /><Corner /></> },
  { name: '각도', icon: <><path d="M5 1.500h-4.500v4h4v-2h-2" stroke="#d83020" strokeWidth="1.500" /><path d="M4 14l11 -11" /><Corner /></> },
  { name: '팬', icon: <><path d="M2 13l3 -11M2 13l8 -10M2 13l12 -7" /><path d="M1 13.500h13" stroke="#2020d0" strokeWidth="1.500" /><Corner /></> },
  { name: '평행선', icon: <><path d="M2 9l6 -6M3 13l10 -10M8 13l6 -6" /><Corner /></> },
  { name: '주기선', icon: <><path d="M3 3v11M6.500 3v11M10 3v11M13.500 3v11M1 10l5 -5M6 11l7 -6" stroke="#a04030" /><Corner /></> },
  { name: '회귀선', icon: <><path d="M1 14l13 -12" stroke="#2020a0" /><path d="M4 9v6M8 5v7M11 3v6M14 1v5" stroke="#3030a0" /></> },
  { name: '회귀채널', icon: <><path d="M1 9l10 -8M1 14l14 -12M5 15l10 -8" stroke="#2020a0" /><path d="M4 6v8M8 4v8M12 2v7" stroke="#3030a0" /></> },
  { name: '지그재그', icon: <path d="M1 9l3 2l3 -4l2 3l3 -2l3 -3" /> },
  { name: '조정대', icon: <><path d="M5 2.500h11M7 6.500h9M4 12.500h12M2 11l5 -5" /><path d="M0 11h3v3h-3z" fill="#e03020" stroke="none" /><path d="M5 6h3v3h-3z" fill="#2020c0" stroke="none" /></> },
  { name: '자동', icon: <><path d="M0 6l5 -2l4 1l7 -4l-2 6l-3 -3" /><text x="-2" y="15" fontSize="7" fontWeight="bold" fill="#d83020" stroke="none">AUTO</text><Corner /></> },
  { name: '창', icon: <><path d="M1.500 2.500h13v11h-13z" /><path d="M1 3.500h14" strokeWidth="2" /><path d="M3 6h5l-5 5z" fill="#e03020" stroke="none" /><Corner /></> },
  { name: '문서', icon: <path d="M5.500 1.500h8v13h-10.500v-10zM5.500 1.500v3h-2.500M5 7.500h6M5 9.500h6M5 11.500h6" /> },
  { name: '차트', icon: <><path d="M1.500 1v13.500h14M4 14v-4M7 14v-5M10 14v-4M13 14v-6" /><path d="M2 9l4 -4l3 3l5 -6" stroke="#d04040" /></> },
  { name: '주기 전환', icon: <path d="M8 1v14M1 7.500h14M1.500 1.500v4h3l1 -2l-1 -2zM10 1v4l2 -2l1 2l2 -1v-3M1.500 14v-4h5v4M4 10v4M14.500 10h-4v4h4M10 12h4" /> },
  { name: '도구 설정', icon: <><path d="M3 2l3 3l-1 2l-2 0l-2 -2c0 3 2 4 5 4l6 6l2 -2l-6 -6c0 -3 -2 -5 -5 -5" /><Corner /></> },
];

const shortcuts = [['가격', '이평'], ['그물', '차트'], ['CCI'], ['MA', 'CD'], ['F -', 'Stoc'], ['S -', 'Stoc'], ['거래', '량'], ['OBV'], ['심리', '도'], ['Bol', 'Band'], ['Pivot']];

function Rail({ active, children }: { active?: boolean; children: ReactNode }) {
  const arrow = 'flex h-[12px] items-center justify-center bg-linear-to-b from-white to-[#dcdcdc]';
  return (
    <div className="flex w-7 shrink-0 flex-col">
      <div className="flex flex-col gap-px border border-[#808080] bg-[#808080]">
        <button className={arrow} aria-label="위로"><Icon size={8}><path d="M0 12h16l-8 -8z" fill="#999" stroke="none" /></Icon></button>
        <button className={arrow} aria-label="아래로"><Icon size={8}><path d="M0 4h16l-8 8z" fill={active ? '#284878' : '#999'} stroke="none" /></Icon></button>
      </div>
      <div className="mt-px flex-1 border border-[#808080] bg-[#efefef]">
        <div className="flex flex-col bg-linear-to-r from-[#fafafa] via-[#eeeeee] to-[#c8c8c8]">{children}</div>
      </div>
    </div>
  );
}

function TitleBar() {
  return (
    <header className="flex h-[22px] items-center border-t border-[#4e6b48] bg-[#23441c] pr-2 pl-[5px] text-[13px] text-white">
      <span className="flex h-3 w-3 items-center justify-center bg-[#c46a10] text-[11px] font-bold">1</span>
      <span className="ml-[3px] flex h-3 w-3 items-center justify-center bg-[#777] text-[11px] font-bold">?</span>
      <h1 className="ml-[5px] text-[13px]">[0560] 주식차트</h1>
      <div className="ml-auto flex items-center gap-1">
        <button aria-label="내보내기"><Icon size={14}><path d="M7 5h8v9h-11v-6M9 3h6" stroke="#b8c4b4" strokeWidth="1.500" /><path d="M6 6l-5 -5M1 5v-4h4" stroke="#b8c4b4" strokeWidth="1.500" /></Icon></button>
        <button aria-label="선택"><Icon size={14}><path d="M4 4v-3h11v11h-3M1 4h11v11h-11z" stroke="#b8c4b4" strokeWidth="1.500" /><path d="M3 9l3 3l5 -6" stroke="#b8c4b4" strokeWidth="2" /></Icon></button>
        <button aria-label="화면 캡처"><Icon size={14}><path d="M1 4h14v10h-14zM2 2h5" stroke="#b8c4b4" strokeWidth="1.500" /><circle cx="8" cy="9" r="2.500" stroke="#b8c4b4" strokeWidth="1.500" /></Icon></button>
        <button aria-label="설정"><Icon size={14}><circle cx="8" cy="8" r="4" stroke="#b8c4b4" strokeWidth="2" /><path d="M8 1v3M8 12v3M1 8h3M12 8h3M3 3l2 2M11 11l2 2M3 13l2 -2M11 5l2 -2" stroke="#b8c4b4" strokeWidth="1.500" /></Icon></button>
        <button className="ml-1" aria-label="최소화"><Icon size={14}><path d="M2 14h12" stroke="#b8c4b4" strokeWidth="2" /></Icon></button>
        <button aria-label="최대화"><Icon size={14}><path d="M2 3h12v10h-12z" stroke="#b8c4b4" strokeWidth="2" /></Icon></button>
        <button aria-label="닫기"><Icon size={14}><path d="M3 3l10 10M13 3l-10 10" stroke="#c8d0c4" strokeWidth="2" /></Icon></button>
      </div>
    </header>
  );
}

export default function App() {
  return (
    <div className="min-h-screen bg-[#dddbd5] font-['Liberation_Sans','Noto_Sans_CJK_KR',sans-serif] text-[12px] leading-4 text-black">
      <TitleBar />
      <div className="pt-1 pr-[3px] pb-1 pl-1">
        <div className="border border-[#a4a4a0] pr-[3px] pb-[2px] pl-1">
          <Toolbar />
          <QuoteRow />
          <main className="mt-[2px] flex">
            <Sidebar />
            <section className="mr-[3px] ml-[3px] min-w-0 flex-1 border border-[#7c8490]">
              <StockChart />
              <ChartFooter />
            </section>
            <Rail>
              {shortcuts.map(lines => (
                <button key={lines.join()} className="flex h-[22px] flex-col items-center justify-center text-[10px] leading-[10px] font-bold whitespace-nowrap">
                  {lines.map(l => <span key={l}>{l}</span>)}
                </button>
              ))}
            </Rail>
            <div className="w-[2px] shrink-0" />
            <Rail active>
              {drawTools.map((t, i) => (
                <button key={t.name} aria-label={t.name} className={`flex h-[22px] items-center justify-center ${i === 0 ? 'border border-[#999] bg-white' : ''} ${i === 4 ? 'mt-1 border-t border-[#999]' : ''}`}>
                  <Icon className="overflow-visible">{t.icon}</Icon>
                </button>
              ))}
            </Rail>
          </main>
        </div>
      </div>
    </div>
  );
}
